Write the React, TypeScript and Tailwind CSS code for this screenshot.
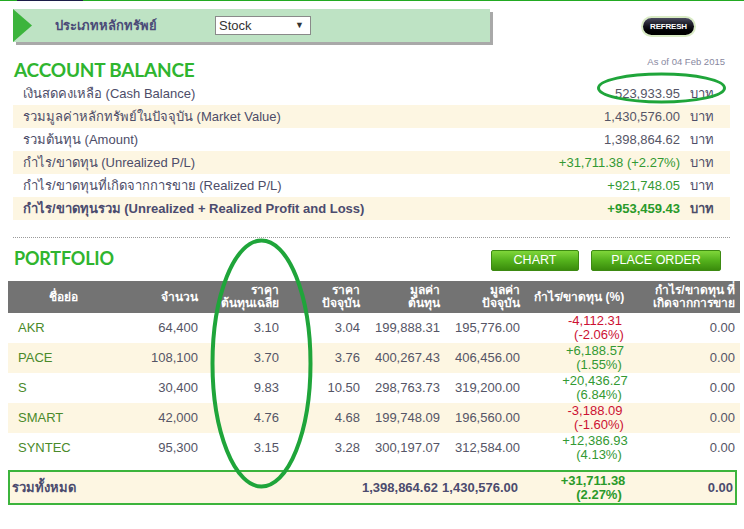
import React from "react";

interface Holding {
  symbol: string;
  volume: string;
  avgCost: string;
  price: string;
  cost: string;
  market: string;
  pl: string;
  plPct: string;
  realized: string;
}

const holdings: Holding[] = [
  { symbol: "AKR", volume: "64,400", avgCost: "3.10", price: "3.04", cost: "199,888.31", market: "195,776.00", pl: "-4,112.31", plPct: "(-2.06%)", realized: "0.00" },
  { symbol: "PACE", volume: "108,100", avgCost: "3.70", price: "3.76", cost: "400,267.43", market: "406,456.00", pl: "+6,188.57", plPct: "(1.55%)", realized: "0.00" },
  { symbol: "S", volume: "30,400", avgCost: "9.83", price: "10.50", cost: "298,763.73", market: "319,200.00", pl: "+20,436.27", plPct: "(6.84%)", realized: "0.00" },
  { symbol: "SMART", volume: "42,000", avgCost: "4.76", price: "4.68", cost: "199,748.09", market: "196,560.00", pl: "-3,188.09", plPct: "(-1.60%)", realized: "0.00" },
  { symbol: "SYNTEC", volume: "95,300", avgCost: "3.15", price: "3.28", cost: "300,197.07", market: "312,584.00", pl: "+12,386.93", plPct: "(4.13%)", realized: "0.00" },
];

const balances = [
  { label: "เงินสดคงเหลือ (Cash Balance)", value: "523,933.95", tone: "plain" },
  { label: "รวมมูลค่าหลักทรัพย์ในปัจจุบัน (Market Value)", value: "1,430,576.00", tone: "plain" },
  { label: "รวมต้นทุน (Amount)", value: "1,398,864.62", tone: "plain" },
  { label: "กำไร/ขาดทุน (Unrealized P/L)", value: "+31,711.38 (+2.27%)", tone: "green" },
  { label: "กำไร/ขาดทุนที่เกิดจากการขาย (Realized P/L)", value: "+921,748.05", tone: "green" },
  { label: "กำไร/ขาดทุนรวม (Unrealized + Realized Profit and Loss)", value: "+953,459.43", tone: "total" },
];

const cols = "grid grid-cols-[122px_70px_81px_81px_80px_80px_114px_104px]";

export default function App() {
  return (
    <div className="relative w-[744px] h-[529px] overflow-hidden bg-white font-['Liberation_Sans','Tahoma',sans-serif] text-[13px] text-[#555566]">
      {/* top rule */}
      <div className="flex h-px bg-[#22aa22]">
        <div className="ml-[17px] w-[66px] bg-[#1c1c48]" />
      </div>

      {/* security type bar */}
      <div className="flex items-start mt-[8px]">
        <div className="ml-[13px] w-[477px] h-[33px] bg-[#bee3c4] shadow-[3px_3px_0_#a9a9a9] flex items-center">
          <svg width="19" height="33" viewBox="0 0 19 33" className="shrink-0">
            <polygon points="0,0 19,16.5 0,33" fill="#3cb43c" />
          </svg>
          <span className="ml-[23px] w-[160px] font-bold text-[#4b4b78]">ประเภทหลักทรัพย์</span>
          <div className="w-[96px] h-[19px] bg-white border border-[#8a8a8a] flex items-center justify-between pl-[3px] pr-[6px] text-[#333]">
            <span>Stock</span>
            <span className="text-[9px]">▼</span>
          </div>
        </div>
        <button className="ml-auto mr-[50px] mt-[9px] w-[51px] h-[17px] rounded-full bg-gradient-to-b from-[#4a4a5e] via-[#111118] to-[#000] ring-2 ring-[#d9ebc4] text-white text-[8px] font-bold tracking-tight leading-none">
          REFRESH
        </button>
      </div>

      {/* account balance */}
      <div className="flex items-start justify-between mt-[17px] pl-[14px] pr-[19px]">
        <h1 className="font-['Lato',sans-serif] font-bold text-[19px] leading-[22px] text-[#2fb52f] tracking-[-0.2px]">ACCOUNT BALANCE</h1>
        <span className="text-[9.5px] text-[#8888a0] mt-[-4px]">As of 04 Feb 2015</span>
      </div>

      <div className="ml-[13px] w-[717px] mt-[1px]">
        {balances.map((b, i) => (
          <div key={b.label} className={`flex items-center h-[23px] ${i % 2 === 1 ? "bg-[#fdf6e2]" : ""}`}>
            <span className={`pl-[10px] ${b.tone === "total" ? "font-bold text-[#4b4b6e]" : "text-[#4d4d68]"}`}>{b.label}</span>
            <span
              className={`flex-1 text-right ${
                b.tone === "total" ? "font-bold text-[#2a9a2a]" : b.tone === "green" ? "text-[#339933]" : "text-[#555566]"
              }`}
            >
              {b.value}
            </span>
            <span className={`w-[50px] pl-[10px] text-[#4d4d68] ${b.tone === "total" ? "font-bold" : ""}`}>บาท</span>
          </div>
        ))}
      </div>

      <div className="ml-[13px] w-[717px] mt-[17px] border-t border-dotted border-[#9a9a9a]" />

      {/* portfolio */}
      <div className="flex items-start h-[22px] mt-[9px]">
        <h2 className="pl-[14px] font-['Lato',sans-serif] font-bold text-[18px] leading-[22px] text-[#2fb52f] tracking-[-0.2px]">PORTFOLIO</h2>
        <div className="ml-auto mr-[23px] mt-[3px] flex gap-[12px]">
          <button className="w-[88px] h-[21px] rounded-[2px] border border-[#3d8a12] bg-gradient-to-b from-[#7fd63a] via-[#54b21c] to-[#3a8c0c] text-white text-[12.5px] leading-none">
            CHART
          </button>
          <button className="w-[130px] h-[21px] rounded-[2px] border border-[#3d8a12] bg-gradient-to-b from-[#7fd63a] via-[#54b21c] to-[#3a8c0c] text-white text-[12.5px] leading-none">
            PLACE ORDER
          </button>
        </div>
      </div>

      <div className="ml-[8px] w-[732px] mt-[12px]">
        <div className={`${cols} h-[32px] bg-[#737373] text-white font-bold text-[12px] leading-[13px] items-center`}>
          <div className="text-center pr-[12px]">ชื่อย่อ</div>
          <div className="text-right pr-[2px]">จำนวน</div>
          <div className="text-right pr-[2px]">ราคา<br />ต้นทุนเฉลี่ย</div>
          <div className="text-right pr-[2px]">ราคา<br />ปัจจุบัน</div>
          <div className="text-right pr-[2px]">มูลค่า<br />ต้นทุน</div>
          <div className="text-right pr-[2px]">มูลค่า<br />ปัจจุบัน</div>
          <div className="text-center">กำไร/ขาดทุน (%)</div>
          <div className="text-right pr-[5px]">กำไร/ขาดทุน ที่<br />เกิดจากการขาย</div>
        </div>

        {holdings.map((h, i) => {
          const loss = h.pl.startsWith("-");
          return (
            <div key={h.symbol} className={`${cols} h-[30px] items-center ${i % 2 === 1 ? "bg-[#fdf6e2]" : ""}`}>
              <div className="pl-[10px] text-[#4a8a2a]">{h.symbol}</div>
              <div className="text-right pr-[2px]">{h.volume}</div>
              <div className="text-right pr-[2px]">{h.avgCost}</div>
              <div className="text-right pr-[2px]">{h.price}</div>
              <div className="text-right pr-[2px]">{h.cost}</div>
              <div className="text-right pr-[2px]">{h.market}</div>
              <div className={`flex flex-col items-center pl-[40px] leading-[14px] ${loss ? "text-[#cc1133]" : "text-[#339933]"}`}>
                <span className="mr-[8px]">{h.pl}</span>
                <span>{h.plPct}</span>
              </div>
              <div className="text-right pr-[5px]">{h.realized}</div>
            </div>
          );
        })}

        <div className="mt-[7px] w-[729px] h-[35px] border-2 border-[#3cb43c] bg-[#fdf6e2] grid grid-cols-[120px_70px_81px_81px_80px_80px_114px_99px] items-center font-bold text-[#4b4b6e]">
          <div className="pl-[2px]">รวมทั้งหมด</div>
          <div />
          <div />
          <div />
          <div className="text-right pr-[12px] whitespace-nowrap">1,398,864.62</div>
          <div className="text-right pr-[4px] whitespace-nowrap">1,430,576.00</div>
          <div className="flex flex-col items-center pl-[40px] leading-[14px] text-[#2a9a2a]">
            <span className="mr-[12px]">+31,711.38</span>
            <span>(2.27%)</span>
          </div>
          <div className="text-right pr-[2px]">0.00</div>
        </div>
      </div>

      {/* hand-drawn annotation marks */}
      <svg className="absolute left-0 top-0 pointer-events-none" width="744" height="529">
        <ellipse cx="661.5" cy="88" rx="63" ry="14" fill="none" stroke="#1fa53a" strokeWidth="3" />
        <ellipse cx="261.5" cy="363.5" rx="49" ry="123" fill="none" stroke="#1fa53a" strokeWidth="4" />
      </svg>
    </div>
  );
}
